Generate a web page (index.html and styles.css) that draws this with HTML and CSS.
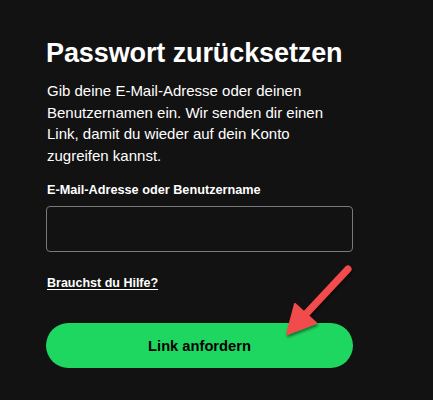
FILE: index.html
```html
<!DOCTYPE html>
<html lang="de">
<head>
    <meta charset="UTF-8">
    <meta name="viewport" content="width=device-width, initial-scale=1.0">
    <title>Passwort zurücksetzen</title>
    <link rel="stylesheet" href="styles.css">
</head>
<body>
    <div class="container">
        <h1>Passwort zurücksetzen</h1>
        <p class="intro">Gib deine E-Mail-Adresse oder deinen Benutzernamen ein. Wir senden dir einen Link, damit du wieder auf dein Konto zugreifen kannst.</p>

        <label for="user">E-Mail-Adresse oder Benutzername</label>
        <input type="text" id="user">

        <a href="#" class="help">Brauchst du Hilfe?</a>

        <button class="send">Link anfordern</button>
    </div>

    <svg class="arrow" width="433" height="400" viewBox="0 0 433 400">
        <defs>
            <filter id="shadow" x="-20%" y="-20%" width="140%" height="140%">
                <feDropShadow dx="1" dy="2" stdDeviation="1.5" flood-color="#000" flood-opacity="0.5"/>
            </filter>
        </defs>
        <g filter="url(#shadow)" fill="#f24b4b" stroke="#f24b4b">
            <line x1="348" y1="269" x2="304" y2="316" stroke-width="7" stroke-linecap="round"/>
            <polygon points="287,334 295,304 316,323" stroke-width="2" stroke-linejoin="round"/>
        </g>
    </svg>
</body>
</html>
```
FILE: styles.css
```css
body {
    margin: 0;
    background: #121212;
    color: #fff;
    font-family: "Liberation Sans", Arial, sans-serif;
}
.container {
    width: 307px;
    padding: 37px 0 0 46px;
}
h1 {
    margin: 0;
    font-size: 27px;
    line-height: 32px;
    letter-spacing: -0.1px;
    font-weight: bold;
}
.intro {
    margin: 11px 0 0 1px;
    font-size: 15px;
    line-height: 21.5px;
}
label {
    display: block;
    margin: 17px 0 0 1px;
    font-size: 12.7px;
    font-weight: bold;
}
input {
    display: block;
    box-sizing: border-box;
    width: 307px;
    height: 46px;
    margin-top: 9px;
    background: #121212;
    border: 1px solid #7a7a7a;
    border-radius: 4px;
    color: #fff;
    font-size: 15px;
    padding: 0 12px;
}
.help {
    display: inline-block;
    margin: 24px 0 0 1px;
    color: #fff;
    font-size: 12.5px;
    font-weight: bold;
    text-underline-offset: 2px;
}
.send {
    display: block;
    width: 307px;
    height: 45px;
    margin-top: 32px;
    background: #1ed760;
    color: #000;
    border: none;
    border-radius: 23px;
    font-family: "Liberation Sans", Arial, sans-serif;
    font-size: 14.7px;
    font-weight: bold;
    cursor: pointer;
}
.arrow {
    position: absolute;
    left: 0;
    top: 0;
    pointer-events: none;
}
```
